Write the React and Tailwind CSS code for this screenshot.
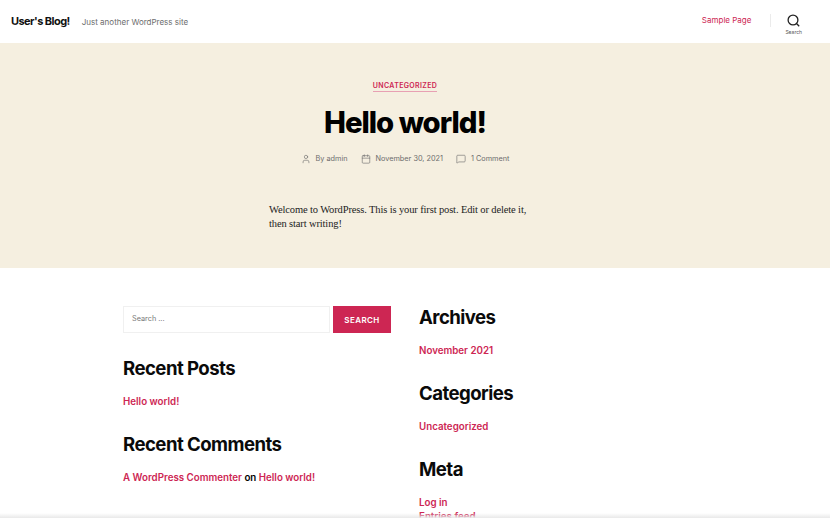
import React from 'react';
import { User, Calendar, MessageSquare } from 'lucide-react';

const inter = 'font-["Inter",sans-serif]';

const Widget = ({ title, className = '', children }) => (
  <section className={className}>
    <h2 className="text-[18.6px] leading-[26px] font-bold tracking-[-0.55px] text-[#0a0a0a]">{title}</h2>
    <div className="mt-[14px] text-[9.75px] leading-[14px] font-semibold text-[#cd2653]">{children}</div>
  </section>
);

const Meta = ({ icon: Icon, children }) => (
  <span className="flex items-center gap-[5px]">
    <Icon size={10} strokeWidth={1.5} className="text-[#6d6d6d]" />
    {children}
  </span>
);

export default function App() {
  return (
    <div className={`relative h-[518px] w-[830px] overflow-hidden bg-white ${inter}`}>
      {/* header */}
      <header className="flex h-[43px] items-center pl-[11px] pr-[28px]">
        <span className="text-[11px] font-bold tracking-[-0.55px] text-[#111]">User's Blog!</span>
        <span className="ml-[12px] text-[8px] text-[#6d6d6d]">Just another WordPress site</span>
        <a className="ml-auto mb-[3px] text-[8px] text-[#cd2653]">Sample Page</a>
        <div className="ml-[19px] mb-[3px] h-[13px] w-px bg-[#ebebeb]" />
        <div className="ml-[14px] flex flex-col items-center pt-[7px]">
          <svg width="13" height="13" viewBox="0 0 13 13" fill="none" stroke="#222" strokeWidth="1.3">
            <circle cx="6" cy="6" r="4.9" />
            <path d="M9.5 9.5 12.2 12.2" />
          </svg>
          <span className="mt-[2px] text-[5px] leading-[7px] text-[#555]">Search</span>
        </div>
      </header>

      {/* post */}
      <main className="h-[225px] bg-[#f5efe0] pt-[38px]">
        <div className="pr-[20px] text-center text-[7px] leading-[9px] font-semibold tracking-[0.35px] text-[#cd2653]">
          <span className="border-b border-[#e8a0b3] pb-[1px]">UNCATEGORIZED</span>
        </div>
        <h1 className="mt-[13px] pr-[20px] text-center text-[29.3px] leading-[40px] font-extrabold tracking-[-1px] text-black">Hello world!</h1>
        <div className="mt-[10px] flex justify-center pr-[20px] text-[7.3px] leading-[12px] text-[#6d6d6d]">
          <Meta icon={User}>By admin</Meta>
          <span className="w-[13px]" />
          <Meta icon={Calendar}>November 30, 2021</Meta>
          <span className="w-[13px]" />
          <Meta icon={MessageSquare}>1 Comment</Meta>
        </div>
        <p className='mt-[38px] ml-[269px] w-[265px] font-["Liberation_Serif",serif] text-[10.5px] leading-[14px] tracking-[-0.13px] text-[#222]'>
          Welcome to WordPress. This is your first post. Edit or delete it, then start writing!
        </p>
      </main>

      {/* widgets */}
      <div className="grid grid-cols-[296px_1fr] pl-[123px] pt-[38px]">
        <div>
          <form className="flex h-[27px] w-[268px] gap-[3px]">
            <div className="flex flex-1 items-center border border-[#f0f0f0] pl-[8px] text-[7.3px] text-[#777]">Search ...</div>
            <button type="button" className="w-[58px] bg-[#cd2653] text-[8px] font-semibold tracking-[0.4px] text-white">SEARCH</button>
          </form>
          <Widget title="Recent Posts" className="mt-[22px]">
            <div>Hello world!</div>
          </Widget>
          <Widget title="Recent Comments" className="mt-[22px]">
            <div>
              A WordPress Commenter <span className="text-black">on</span> Hello world!
            </div>
          </Widget>
        </div>
        <div className="-mt-[2px]">
          <Widget title="Archives">
            <div>November 2021</div>
          </Widget>
          <Widget title="Categories" className="mt-[22px]">
            <div>Uncategorized</div>
          </Widget>
          <Widget title="Meta" className="mt-[22px]">
            <div>Log in</div>
            <div>Entries feed</div>
          </Widget>
        </div>
      </div>

      {/* fade at the bottom edge */}
      <div className="absolute inset-x-0 bottom-0 h-[5px] bg-gradient-to-b from-transparent to-[#e9e9e9]" />
    </div>
  );
}
